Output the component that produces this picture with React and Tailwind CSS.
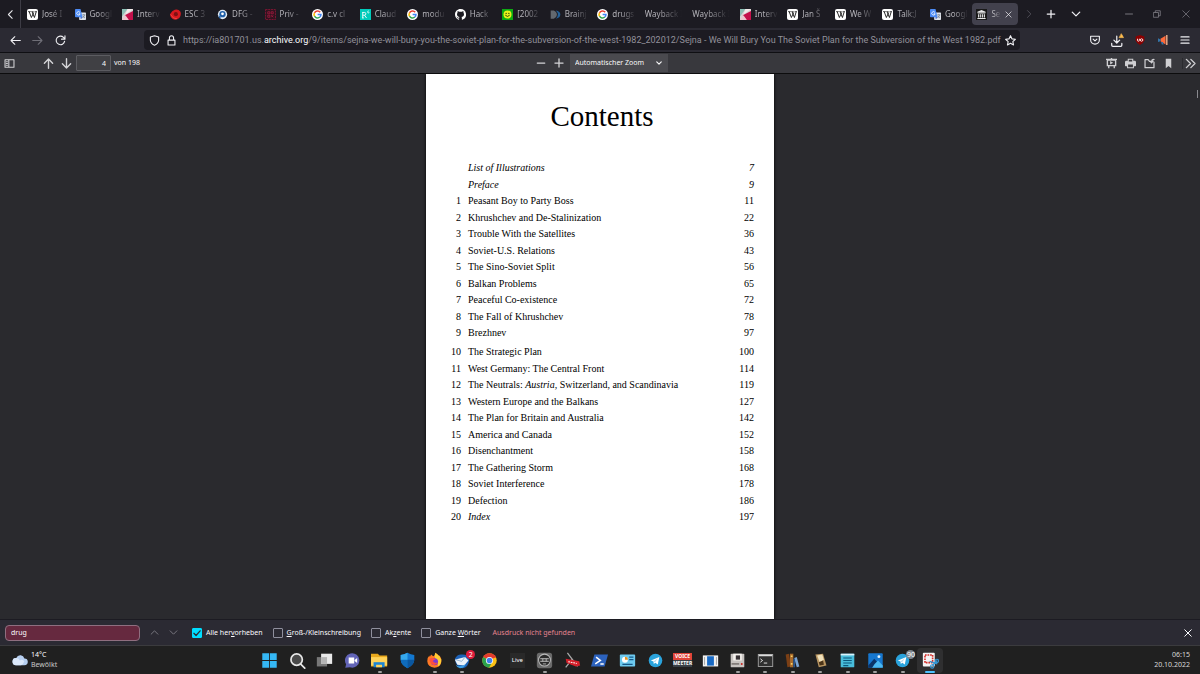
import React from "react";

const line = { fill: "none", stroke: "currentColor", strokeLinecap: "round", strokeLinejoin: "round" };

function Svg({ size = "size-3", box = 16, sw = 1.6, children, className = "" }) {
  return (
    <svg viewBox={`0 0 ${box} ${box}`} className={`${size} shrink-0 ${className}`} {...line} strokeWidth={sw} aria-hidden="true">
      {children}
    </svg>
  );
}

/* ---------- favicons ---------- */

const Fav = ({ children }) => (
  <svg viewBox="0 0 16 16" className="size-[11px] shrink-0" aria-hidden="true">{children}</svg>
);

const Wiki = () => (
  <Fav>
    <rect width="16" height="16" rx="3" fill="#fff" />
    <path d="M1.5 3.8h4M6.3 3.8h3.4M11 3.8h3.6" stroke="#111" strokeWidth="1" />
    <path d="M3.2 4l3.2 8.4L9.8 5M7.4 4l3.4 8.4L13.4 4" fill="none" stroke="#111" strokeWidth="1.3" />
  </Fav>
);
const Translate = () => (
  <Fav>
    <rect x="6" y="5" width="10" height="11" rx="1" fill="#dfe3ea" />
    <path d="M0 1.2Q0 0 1.2 0H8l3 12H1.2Q0 12 0 10.800z" fill="#4c8bf5" />
    <path d="M7.200 5A2.500 2.500 0 1 0 7.500 7H5.300" fill="none" stroke="#fff" strokeWidth="1.200" />
    <path d="M10.500 8.500h4.500M12.700 7.500v1M14 8.500q-.8 3-3 4.500M11.500 10q1 2 3 3" fill="none" stroke="#6b7785" strokeWidth="1" />
    <path d="M8 12h3l-2.500 3z" fill="#2a56c6" />
  </Fav>
);
const Inter = () => (
  <Fav>
    <rect width="16" height="16" fill="#d9d4d4" />
    <path d="M0 0h8L0 11z" fill="#8cc0b6" />
    <path d="M16 3v13H9L4 9z" fill="#c4114b" />
    <path d="M0 16l5-7 5 7z" fill="#efc5cf" />
    <path d="M8 0h8L5 8z" fill="#f3ecec" />
  </Fav>
);
const Esc = () => (
  <Fav>
    <path d="M7 1q5-1.500 8 2.500Q17 9 13.500 13 9 17 4 14.500 0 12 0 7.500 3 2 7 1z" fill="#d8191f" />
    <circle cx="8.500" cy="7.500" r="3" fill="#801013" />
    <path d="M1 8q3 6 9 6" stroke="#ff5650" strokeWidth="1" fill="none" />
  </Fav>
);
const Dfg = () => (
  <Fav>
    <circle cx="8" cy="8" r="6.800" fill="#e4edf6" />
    <circle cx="8" cy="7.500" r="4.600" fill="#1f5fa8" />
    <path d="M2 9q3 1 4 5l-3-1z" fill="#1f5fa8" />
    <circle cx="8" cy="7" r="2" fill="#fff" />
  </Fav>
);
const Priv = () => (
  <Fav>
    <rect x=".7" y=".7" width="14.600" height="14.600" fill="#32131f" stroke="#8a1737" strokeWidth="1.200" strokeDasharray="3 1" />
    <path d="M4 4h3v3H4zM9 4h3v3H9zM4 9h3v3H4zM9 9l3 3M12 9l-3 3" fill="none" stroke="#b01c45" strokeWidth="1" />
  </Fav>
);
const Google = () => (
  <Fav>
    <circle cx="8" cy="8" r="8" fill="#fff" />
    <g fill="none" strokeWidth="2.200">
      <path d="M12 4.700A5 5 0 0 0 3.600 5.700" stroke="#ea4335" />
      <path d="M3.600 5.700A5 5 0 0 0 3.700 10.500" stroke="#fbbc05" />
      <path d="M3.700 10.500A5 5 0 0 0 11.400 11.700" stroke="#34a853" />
      <path d="M11.400 11.700A5 5 0 0 0 13 8H8.200" stroke="#4285f4" />
    </g>
  </Fav>
);
const Rg = () => (
  <Fav>
    <rect width="16" height="16" fill="#00ccbb" />
    <path d="M4 13V5h2.500a2 2 0 0 1 0 4H4M6.500 9l3 4M3 13h2.500M3 5h1" fill="none" stroke="#fff" strokeWidth="1.300" />
    <path d="M13 3a1.500 1.500 0 1 0 .2 2.500V4.600h-1" fill="none" stroke="#fff" strokeWidth=".9" />
  </Fav>
);
const Github = () => (
  <Fav>
    <path fill="#fff" d="M8 0C3.580 0 0 3.580 0 8c0 3.540 2.290 6.530 5.470 7.590.4.070.55-.17.55-.38 0-.19-.01-.82-.01-1.490-2.010.37-2.530-.49-2.690-.94-.09-.23-.48-.94-.82-1.130-.28-.15-.68-.52-.01-.53.63-.01 1.080.58 1.230.82.72 1.210 1.870.87 2.330.66.070-.52.28-.87.51-1.070-1.780-.2-3.640-.89-3.640-3.950 0-.87.31-1.590.82-2.150-.08-.2-.36-1.020.080-2.120 0 0 .67-.21 2.200.82a7.600 7.600 0 0 1 4 0c1.530-1.040 2.200-.82 2.200-.82.44 1.100.16 1.920.080 2.120.51.56.82 1.270.82 2.150 0 3.070-1.870 3.750-3.650 3.950.29.25.54.73.54 1.480 0 1.070-.01 1.930-.01 2.200 0 .21.15.46.55.38A8 8 0 0 0 8 0z" />
  </Fav>
);
const Smiley = () => (
  <Fav>
    <rect width="16" height="16" fill="#0cab12" />
    <circle cx="8" cy="8" r="5.800" fill="#e7f01c" />
    <circle cx="6" cy="6.300" r="1" fill="#182b00" />
    <circle cx="10" cy="6.300" r="1" fill="#182b00" />
    <path d="M4.800 9q3.200 3.600 6.400 0" fill="none" stroke="#182b00" strokeWidth="1.200" />
  </Fav>
);
const Brain = () => (
  <Fav>
    <path d="M1 2h4.500q4.500 2 4.500 6t-4.500 6H1z" fill="#62686f" />
    <path d="M8.500 2q6.500 1 6.500 6t-6.500 6q3-3 3-6t-3-6z" fill="#23629b" />
  </Fav>
);
const Archive = () => (
  <Fav>
    <rect width="16" height="16" fill="#191919" />
    <path d="M8 1.500L14 4v1.300H2V4zM2.500 6h11v1h-11zM3 7.500h1.800v5H3zM6 7.500h1.500v5H6zM8.600 7.500h1.500v5H8.600zM11.300 7.500H13v5h-1.700zM2 13.200h12v1.500H2z" fill="#e8e8e8" />
  </Fav>
);

const tabs = [
  [Wiki, "José I"], [Translate, "Googl"], [Inter, "Interv"], [Esc, "ESC 3"], [Dfg, "DFG -"],
  [Priv, "Priv -"], [Google, "c.v cl"], [Rg, "Claud"], [Google, "modu"], [Github, "Hack"],
  [Smiley, "[2002"], [Brain, "Brainj"], [Google, "drugs"], [null, "Wayback I"], [null, "Wayback I"],
  [Inter, "Interv"], [Wiki, "Jan Š"], [Wiki, "We W"], [Wiki, "Talk:J"], [Translate, "Googl"],
];

function IconButton({ label, className = "", children }) {
  return (
    <button type="button" aria-label={label} className={`flex shrink-0 items-center justify-center ${className}`}>
      {children}
    </button>
  );
}

function TabBar() {
  return (
    <header className="flex h-7 shrink-0 items-center bg-[#1c1b22] text-[8px] text-[#b4b3b9]">
      <IconButton label="Tabs nach links" className="h-7 w-[21px] border-r border-[#3d3c45] text-[#e8e8ec]">
        <Svg size="size-[11px]"><path d="M10.500 2.500L5 8l5.500 5.500" /></Svg>
      </IconButton>
      <div role="tablist" className="grid h-full min-w-0 flex-1 grid-cols-[repeat(21,minmax(0,1fr))] items-center">
        {tabs.map(([Icon, title], i) => (
          <button key={i} type="button" role="tab" aria-selected="false" className="flex min-w-0 items-center gap-1 pl-1.5">
            {Icon && <Icon />}
            <span className="min-w-0 flex-1 overflow-hidden whitespace-nowrap text-left [mask-image:linear-gradient(to_right,black_30%,transparent_90%)]">{title}</span>
          </button>
        ))}
        <div role="tab" aria-selected="true" className="mx-px flex h-[22px] min-w-0 items-center gap-1 rounded-sm bg-[#42414d] pl-1 pr-1.5">
          <Archive />
          <span className="min-w-0 flex-1 overflow-hidden whitespace-nowrap [mask-image:linear-gradient(to_right,black_30%,transparent)]">Sej</span>
          <IconButton label="Tab schließen" className="text-[#f0f0f4]">
            <Svg size="size-[7px]"><path d="M2 2l12 12M14 2L2 14" /></Svg>
          </IconButton>
        </div>
      </div>
      <div className="flex shrink-0 items-center text-[#f0f0f4]">
        <IconButton label="Tabs nach rechts" className="w-5 text-[#4c4b54]"><Svg size="size-2.5"><path d="M5.500 2.500L11 8l-5.500 5.500" /></Svg></IconButton>
        <IconButton label="Neuer Tab" className="w-6"><Svg size="size-2.5" sw={2}><path d="M8 2v12M2 8h12" /></Svg></IconButton>
        <IconButton label="Alle Tabs" className="w-[26px]"><Svg size="size-2.5" sw={2}><path d="M2 5l6 6 6-6" /></Svg></IconButton>
      </div>
      <div className="ml-[26px] flex shrink-0 items-center text-[#77767d]">
        <IconButton label="Minimieren" className="w-7"><Svg size="size-2" sw={2}><path d="M1 8h14" /></Svg></IconButton>
        <IconButton label="Verkleinern" className="w-7"><Svg size="size-2" sw={1.800}><path d="M1.500 5h9.500v9.500H1.500zM4.500 4.500v-3h10v10h-3" /></Svg></IconButton>
        <IconButton label="Schließen" className="w-[29px]"><Svg size="size-2"><path d="M1.500 1.500l13 13M14.500 1.500l-13 13" /></Svg></IconButton>
      </div>
    </header>
  );
}

function NavBar() {
  return (
    <nav className="flex h-[25px] shrink-0 items-center border-b border-[#0f0f13] bg-[#2b2a33] px-1 text-[#f0f0f4]">
      <IconButton label="Zurück" className="w-[22px]"><Svg size="size-[11px]"><path d="M15 8H1.500M7 2.500L1.500 8 7 13.500" /></Svg></IconButton>
      <IconButton label="Vor" className="w-[23px] text-[#6f6e77]"><Svg size="size-[11px]"><path d="M1 8h13.500M9 2.500L14.500 8 9 13.500" /></Svg></IconButton>
      <IconButton label="Neu laden" className="w-[22px]"><Svg size="size-[11px]"><path d="M14 9A6.200 6.200 0 1 1 12.300 3.500L14 5.200M14.500 1v5h-5" /></Svg></IconButton>
      <div className="ml-[73px] flex h-5 min-w-0 flex-1 items-center rounded-sm bg-[#1c1b22] pl-[5px] pr-1">
        <Svg size="size-[11px]"><path d="M8 1l6 1.800V8q-.5 4.500-6 7Q2.500 12.500 2 8V2.800z" /></Svg>
        <Svg size="size-[11px]" className="mx-1.5"><path d="M3 7.500h10v7H3zM5 7V4a3 3 0 0 1 6 0v3" /></Svg>
        <a href="#page" className="min-w-0 flex-1 overflow-hidden whitespace-nowrap font-['Roboto',sans-serif] text-[9px] leading-4 text-[#92919a]">
          https://ia801701.us.<span className="text-[#fbfbfe]">archive.org</span>/9/items/sejna-we-will-bury-you-the-soviet-plan-for-the-subversion-of-the-west-1982_202012/Sejna - We Will Bury You The Soviet Plan for the Subversion of the West 1982.pdf
        </a>
        <IconButton label="Lesezeichen setzen"><Svg size="size-[11px]"><path d="M8 1l2.100 4.600 5 .6-3.700 3.400 1 4.900L8 12l-4.400 2.500 1-4.900L.9 6.200l5-.6z" /></Svg></IconButton>
      </div>
      <div className="ml-16 flex shrink-0 items-center">
        <IconButton label="Pocket" className="w-[22px]"><Svg size="size-2.5" sw={1.800}><path d="M1 2h14v5.500a7 7 0 0 1-14 0zM5 6.500l3 3 3-3" /></Svg></IconButton>
        <IconButton label="Downloads" className="w-[23px]">
          <svg viewBox="0 0 18 20" className="h-[15px] w-[13px]" {...line} strokeWidth="1.700" aria-hidden="true">
            <path d="M8 4v9M4 9.500l4 4 4-4M1 14v2.500q0 1.500 1.500 1.500h11q1.500 0 1.500-1.500V14" />
            <path d="M14.500 1l2.800 5h-5.600z" fill="#ffbd4f" stroke="#ffbd4f" strokeWidth="1" />
          </svg>
        </IconButton>
        <IconButton label="uBlock" className="w-[22px]">
          <svg viewBox="0 0 16 16" className="size-2.5" aria-hidden="true">
            <path d="M8 0l7 2.500v6Q14 13 8 16 2 13 1 8.500v-6z" fill="#8b0000" />
            <path d="M4 6v2.500a1.500 1.500 0 0 0 3 0V6" fill="none" stroke="#fff" strokeWidth="1.400" />
            <circle cx="10.500" cy="8" r="2" fill="none" stroke="#fff" strokeWidth="1.400" />
          </svg>
        </IconButton>
        <IconButton label="Erweiterung" className="w-[23px]">
          <svg viewBox="0 0 16 16" className="size-2.5" aria-hidden="true">
            <path d="M4 6l8-5v14l-8-5z" fill="#ff6a3a" />
            <rect x="13" y="0" width="2.200" height="16" fill="#f5b28e" />
            <path d="M0 5l4 2v3l-4 1zM5 11h3l1 4H6z" fill="#3474a8" />
          </svg>
        </IconButton>
        <IconButton label="Menü" className="w-[22px]"><Svg size="size-2.5" sw={1.800}><path d="M1.500 3h13M1.500 8h13M1.500 13h13" /></Svg></IconButton>
      </div>
    </nav>
  );
}

function PdfToolbar() {
  return (
    <div className="grid h-[21px] shrink-0 grid-cols-[1fr_auto_1fr] items-center border-b border-[#0c0c0d] bg-[#38383d] text-[7px] leading-3 text-[#f9f9fa]">
      <div className="flex items-center pl-1">
        <IconButton label="Seitenleiste" className="mr-6 text-[#cfcfd2]"><Svg size="size-[11px]"><path d="M1.500 2.500h13v11h-13zM7 2.500v11M3.500 5.500h1.500M3.500 8h1.500M3.500 10.500h1.500" /></Svg></IconButton>
        <IconButton label="Vorherige Seite" className="w-[18px] text-[#d4d4d7]"><Svg size="size-[11px]" sw={2}><path d="M8 15V2M2 7.500L8 1.500l6 6" /></Svg></IconButton>
        <IconButton label="Nächste Seite" className="mr-px w-[18px] text-[#d4d4d7]"><Svg size="size-[11px]" sw={2}><path d="M8 1v13M2 8.500l6 6 6-6" /></Svg></IconButton>
        <input id="pageno" aria-label="Seite" defaultValue="4" className="h-4 w-[35px] rounded-[1px] border border-[#5c5c61] bg-[#404044] px-1 text-right outline-none" />
        <label htmlFor="pageno" className="ml-[3px]">von 198</label>
      </div>
      <div className="flex items-center">
        <IconButton label="Verkleinern" className="w-[18px] text-[#d4d4d7]"><Svg size="size-2.5" sw={2}><path d="M2 8h12" /></Svg></IconButton>
        <IconButton label="Vergrößern" className="mr-0.5 w-[18px] text-[#d4d4d7]"><Svg size="size-2.5" sw={2}><path d="M8 1.500v13M1.500 8h13" /></Svg></IconButton>
        <span className="relative flex items-center">
          <select aria-label="Zoom" className="h-[18px] w-[98px] appearance-none bg-[#4a4a4f] pl-[5px] outline-none">
            <option>Automatischer Zoom</option>
          </select>
          <Svg size="size-1.5" sw={3} className="pointer-events-none absolute right-1.5"><path d="M2 5l6 6 6-6" /></Svg>
        </span>
      </div>
      <div className="flex items-center justify-end gap-2 pr-1 text-[#cfcfd2]">
        <IconButton label="Präsentation"><svg viewBox="0 0 16 16" className="size-[11px]" fill="currentColor" aria-hidden="true"><path fillRule="evenodd" d="M0 1h7V0h2v1h7v2h-1v9h-2v3h-2v-3H5v3H3v-3H1V3H0zM3 4v6h10V4zM6 4.500l4.500 2.500L6 9.500z" /></svg></IconButton>
        <IconButton label="Drucken"><svg viewBox="0 0 16 16" className="size-[11px]" fill="currentColor" aria-hidden="true"><path fillRule="evenodd" d="M4 1h8v3h2q2 0 2 2v5q0 1-1 1h-2v3H3v-3H1q-1 0-1-1V6q0-2 2-2h2zM5.500 2.500V5h5V2.500zM4.500 9.500v4h7v-4z" /></svg></IconButton>
        <IconButton label="Öffnen"><Svg size="size-[11px]" sw={1.800}><path d="M14.500 6v8h-13V2.500H6L8 5h1.500M14.500 2q-3.500 0-3.500 4M8.800 4.500L11 7l2.200-2.500" /></Svg></IconButton>
        <IconButton label="Lesezeichen"><svg viewBox="0 0 16 16" className="size-[11px]" fill="currentColor" aria-hidden="true"><path d="M4 1h8v14l-4-3.500L4 15z" /></svg></IconButton>
        <IconButton label="Werkzeuge" className="border-l border-[#2a2a2e] pl-0.5"><Svg size="size-[11px]" sw={2}><path d="M2 2l6 6-6 6M8.500 2l6 6-6 6" /></Svg></IconButton>
      </div>
    </div>
  );
}

const contents = [
  ["", <i>List of Illustrations</i>, <i>7</i>],
  ["", <i>Preface</i>, <i>9</i>],
  ["1", "Peasant Boy to Party Boss", "11"],
  ["2", "Khrushchev and De-Stalinization", "22"],
  ["3", "Trouble With the Satellites", "36"],
  ["4", "Soviet-U.S. Relations", "43"],
  ["5", "The Sino-Soviet Split", "56"],
  ["6", "Balkan Problems", "65"],
  ["7", "Peaceful Co-existence", "72"],
  ["8", "The Fall of Khrushchev", "78"],
  ["9", "Brezhnev", "97"],
  ["10", "The Strategic Plan", "100"],
  ["11", "West Germany: The Central Front", "114"],
  ["12", <>The Neutrals: <i>Austria,</i> Switzerland, and Scandinavia</>, "119"],
  ["13", "Western Europe and the Balkans", "127"],
  ["14", "The Plan for Britain and Australia", "142"],
  ["15", "America and Canada", "152"],
  ["16", "Disenchantment", "158"],
  ["17", "The Gathering Storm", "168"],
  ["18", "Soviet Interference", "178"],
  ["19", "Defection", "186"],
  ["20", <i>Index</i>, "197"],
];

function Rows({ items }) {
  return (
    <tbody>
      {items.map(([no, title, page], i) => (
        <tr key={i} className="h-4 even:h-[17px]">
          <td className="w-[35px] p-0 text-right">{no}</td>
          <td className="p-0 pl-[7px]">{title}</td>
          <td className="p-0 text-right">{page}</td>
        </tr>
      ))}
    </tbody>
  );
}

function Viewer() {
  return (
    <main className="flex min-h-0 flex-1 items-stretch overflow-hidden bg-[#2a2a2e]">
      <div className="flex-1" />
      <article id="page" className="w-[29%] min-w-[348px] bg-white pr-5 pt-6 font-['Liberation_Serif',serif] text-black shadow-[0_0_3px_#000]">
        <h1 className="pl-6 text-center text-[29px] leading-9">Contents</h1>
        <table className="mt-[26px] w-full border-collapse text-[10px] leading-4">
          <Rows items={contents.slice(0, 11)} />
          <tbody><tr className="h-[3px]"><td colSpan={3} className="p-0" /></tr></tbody>
          <Rows items={contents.slice(11)} />
        </table>
      </article>
      <div className="flex flex-1 justify-end pt-4">
        <div className="mr-0.5 h-2 w-px bg-[#8a8a8f]" />
      </div>
    </main>
  );
}

function Check({ id, checked, children }) {
  return (
    <div className="flex items-center gap-1">
      <span className="relative flex">
        <input id={id} type="checkbox" defaultChecked={checked} className="size-2.5 appearance-none rounded-[1px] border border-[#8f8f9d] bg-[#2b2a33] checked:border-[#00ddff] checked:bg-[#00ddff]" />
        {checked && <Svg size="size-2.5" sw={2} className="pointer-events-none absolute inset-0 text-[#2b2a33]"><path d="M3 8.500l3.500 3.500L13 4.500" /></Svg>}
      </span>
      <label htmlFor={id}>{children}</label>
    </div>
  );
}

function FindBar() {
  return (
    <form className="flex h-[26px] shrink-0 items-center border-t border-[#1c1b22] bg-[#2b2a33] pl-[5px] pr-2 text-[7px] leading-3 text-[#fbfbfe]" onSubmit={(e) => e.preventDefault()}>
      <input aria-label="Seite durchsuchen" defaultValue="drug" className="h-4 w-[135px] rounded-sm border border-[#8f6f80] bg-[#66293f] px-[5px] outline-none" />
      <IconButton label="Vorheriges" className="ml-[5px] w-[19px] text-[#85848c]"><Svg size="size-[9px]" sw={1.500}><path d="M2 11l6-6 6 6" /></Svg></IconButton>
      <IconButton label="Nächstes" className="w-[19px] text-[#85848c]"><Svg size="size-[9px]" sw={1.500}><path d="M2 5l6 6 6-6" /></Svg></IconButton>
      <div className="ml-[9px] flex items-center gap-2.5">
        <Check id="all" checked>Alle her<u>v</u>orheben</Check>
        <Check id="case"><u>G</u>roß-/Kleinschreibung</Check>
        <Check id="accent">Ak<u>z</u>ente</Check>
        <Check id="word">Ganze <u>W</u>örter</Check>
      </div>
      <output className="ml-3 text-[#e5838f]">Ausdruck nicht gefunden</output>
      <IconButton label="Suchleiste schließen" className="ml-auto"><Svg size="size-2" sw={2}><path d="M1.500 1.500l13 13M14.500 1.500l-13 13" /></Svg></IconButton>
    </form>
  );
}

/* ---------- taskbar drawings, each on a 20 x 20 canvas ---------- */

const Telegram = () => (
  <>
    <circle cx="10" cy="10" r="8" fill="#2aa3dc" />
    <path d="M4.500 10l10-4.200-1.800 9-3-2.200-1.700 1.600-.4-3z" fill="#fff" />
    <path d="M7.600 11.200l5.500-4-3.600 5z" fill="#b8dcf0" />
  </>
);

const apps = [
  ["Start", <path fill="#35b8f5" d="M1.500 1.500h8v8h-8zM10.500 1.500h8v8h-8zM1.500 10.500h8v8h-8zM10.500 10.500h8v8h-8z" />],
  ["Suche", <g fill="#4a4a4a" stroke="#e8e8e8" strokeWidth="2"><path d="M13.500 14l5 5" strokeLinecap="round" /><circle cx="9" cy="9" r="6.700" /></g>],
  ["Taskansicht", <><path d="M1 6h12v11H1z" fill="#777" /><path d="M6 2h13v12H6z" fill="#e9e9e9" /><path d="M6 6h7v8H6z" fill="#b5b5b5" /></>],
  ["Chat", <><path d="M1.500 18.500l1-4A8.500 8.500 0 1 1 7 18z" fill="#6264b7" /><path d="M5.500 6.500h6.500v7H5.500zM12.500 9.500l3-2.500v6l-3-2.500z" fill="#fff" /></>],
  ["Explorer", <><path d="M0 2h8l2 2h9v13H0z" fill="#e9a91d" /><path d="M0 6h19v10H0z" fill="#ffd35a" /><path d="M3 12h13v6H3z" fill="#1c85d4" /><path d="M6 15h7v3H6z" fill="#ffd35a" /></>, true],
  ["Sicherheit", <><path d="M10 1q4 2.500 8 2.500V9q0 6-8 10Q2 15 2 9V3.500Q6 3.500 10 1z" fill="#1378d1" /><path d="M2 9h8v10Q2 15 2 9z" fill="#0f6cbd" /><path d="M10 9h8q0 6-8 10z" fill="#0b579f" /><path d="M2 9V3.500Q6 3.500 10 1v8z" fill="#36a9ed" /></>],
  ["Firefox", <><path d="M6 3q1 1.500 3 2 2-1 2-4 3 1.500 4 4l1-1q3 4 2 8-1.500 6-8 6.500Q2 18 1.500 11 1.500 6 4 4l.5 2z" fill="#ff7a24" /><path d="M11 1q5 3 7 8 0 6-4 8 1-4-2-8-3-3-1-8z" fill="#ffce35" /><circle cx="10" cy="11.500" r="4.200" fill="#7d3bd0" /><path d="M4 8q4-2 7 1-3 0-3 2 3 3 6 1-2 4-6 3-4-2-4-7z" fill="#ff4f3f" /></>, true],
  ["Thunderbird", <><path d="M1 8q3-6 9-5 7 0 8 6-1 9-8 10-8-1-9-11z" fill="#1d62b8" /><path d="M1 9l12-3 4 4-5 6-8-1z" fill="#edf3fa" /><path d="M2 9l7 2 4-5" fill="none" stroke="#86abcf" /><path d="M2 15q5 4 12-1-2 5-7 5-4-1-5-4z" fill="#3da0e7" /></>, true, "2"],
  ["Chrome", <><circle cx="10" cy="10" r="8.500" fill="#fbc116" /><path d="M10 10L2.600 5.750A8.500 8.500 0 0 1 17.400 5.750z" fill="#e33b2e" /><path d="M2.600 5.750A8.500 8.500 0 0 0 9.500 18.500L13 12 10 10z" fill="#2aa24c" /><path d="M10 6h7.400" stroke="#e33b2e" strokeWidth="1" /><circle cx="10" cy="10" r="4.200" fill="#fff" /><circle cx="10" cy="10" r="3.300" fill="#3f80ee" /></>],
  ["Live", null],
  ["Audio", <><rect x="1" y="1" width="18" height="18" rx="3" fill="#6a6a6a" /><circle cx="10" cy="9.500" r="7" fill="#2a2a2a" stroke="#b9b9b9" strokeWidth="1.200" /><path d="M5 8h10M5 11h10" stroke="#c4c4c4" strokeWidth="1.200" /><path d="M8 8v3M12 8v3M8 14h4" stroke="#c4c4c4" /></>, true],
  ["Pro-Q", <><path d="M4 1l12 16M2 18L10 8" stroke="#a9a9a9" strokeWidth="1.500" fill="none" /><path d="M2 8l16 3 1 5-5 1-11-4z" fill="#d5212b" /><path d="M5 11.500l10 2" stroke="#fff" strokeWidth="1.200" strokeDasharray="2 1" /></>],
  ["PowerShell", <><path d="M4 3h16l-4 14H0z" fill="#2c62bd" /><path d="M6 6l5 4-6 4M11 14h4" fill="none" stroke="#fff" strokeWidth="1.800" /></>],
  ["Systemsteuerung", <><rect x="1" y="3" width="18" height="14" rx="1" fill="#6ecaef" /><circle cx="7" cy="9" r="3.500" fill="#fff" /><path d="M7 9V5.500A3.500 3.500 0 0 1 10.500 9z" fill="#e69221" /><path d="M12 6h5M12 9h5M4 14.500h12" stroke="#165889" strokeWidth="1.500" /></>],
  ["Telegram", <Telegram />],
  ["Voicemeeter", null],
  ["Fenster", <><rect x="1" y="4" width="18" height="13" fill="#f2f2f2" /><rect x="6" y="5" width="8" height="11" fill="#1769c4" /><path d="M3 6v9M17 6v9" stroke="#999" /></>],
  ["Editor", <><rect x="2" y="2" width="16" height="16" rx="1" fill="#c8c4c1" /><rect x="5" y="2" width="10" height="8" fill="#f5f2ee" /><rect x="8" y="4" width="5" height="5" fill="#393336" /><path d="M3 14h9" stroke="#817b78" strokeWidth="2" /><circle cx="15" cy="14" r="1.200" fill="#c8221d" /></>, true],
  ["Terminal", <><rect x="1.500" y="3" width="17" height="14" fill="#303030" stroke="#aaa" /><path d="M2 4h16" stroke="#ddd" strokeWidth="2" /><path d="M4 8l2.500 2L4 12M8 13h4" fill="none" stroke="#fff" /></>, true],
  ["Calibre", <><path d="M2 3l4-1 2 15-4 1z" fill="#7b3f15" /><path d="M7 2h4v16H7z" fill="#a86b2c" /><path d="M8 5h2M8 14h2" stroke="#f7d169" strokeWidth="2" /><path d="M12 7l3-1 3 11-3 1z" fill="#7ba5d4" /><path d="M11 8h2v10h-2z" fill="#2a5892" /></>, true],
  ["Solitär", <><path d="M4 3l9-1 4 14-9 2z" fill="#b89561" /><path d="M6 4l6-1 2 6-5 3z" fill="#f0e1bc" /><path d="M8 12l5-2 1 5-5 1z" fill="#4c3418" /></>, true],
  ["Notizblock", <><rect x="2" y="2" width="16" height="16" rx="1" fill="#49bddb" /><path d="M2 4V2h16v2z" fill="#d9f2fa" /><path d="M5 7h10M5 10h10M5 13h10M5 16h6" stroke="#0c577c" strokeWidth="1.300" /></>, true],
  ["Fotos", <><rect x="1.500" y="1.500" width="17" height="17" rx="1" fill="#1677cf" /><path d="M1.500 16l7-8 10 10.500h-17z" fill="#0b3469" /><path d="M9 14l4-4 5.500 6v2.500H6z" fill="#4ab8f2" /><circle cx="14" cy="5.500" r="1.700" fill="#e7f6ff" /></>, true],
  ["Telegram Desktop", <Telegram />, true, "90"],
  ["Snipping Tool", <><rect x="1" y="1" width="14" height="16" rx="1" fill="#f5f5f5" /><rect x="3.500" y="3.500" width="9" height="9" fill="none" stroke="#d4302b" strokeWidth="1.900" strokeDasharray="2 1" /><path d="M9 11l9 3M12 16l6-6" stroke="#3695d2" strokeWidth="1.600" /><circle cx="17.500" cy="10.500" r="2" fill="none" stroke="#3695d2" strokeWidth="1.300" /><circle cx="12" cy="17" r="2" fill="none" stroke="#3695d2" strokeWidth="1.300" /></>, true],
];

const LiveTile = () => <span className="flex size-[15px] items-center justify-center bg-[#292929] text-[6px]">Live</span>;

const VoiceTile = () => (
  <span className="flex flex-col text-center text-[5px] font-bold leading-[7px]">
    <span className="bg-[#e04438]">VOICE</span>
    <span className="bg-[#394047]">MEETER</span>
  </span>
);

function Taskbar() {
  return (
    <footer className="grid h-[29px] shrink-0 grid-cols-[1fr_auto_1fr] items-center border-t border-[#3b3b3e] bg-[#202020] text-[7px] leading-[10px] text-white">
      <button type="button" className="flex items-center gap-[3px] pl-3 text-left">
        <svg viewBox="0 0 20 20" className="size-4" aria-hidden="true">
          <path d="M5 16.500a4.500 4.500 0 0 1 .3-9Q7 3.500 11 4q3.500.5 4.500 4a4.200 4.200 0 0 1 0 8.500z" fill="#b7cff0" />
          <path d="M5 16.500a4.500 4.500 0 0 1 .3-9q3 0 4.500 3 3-2 5.500 1-1 4-4 5z" fill="#dbe8fa" />
        </svg>
        <span className="text-[#c9c9c9]"><span className="block text-white">14°C</span>Bewölkt</span>
      </button>
      <div className="grid w-[688px] grid-cols-[repeat(25,minmax(0,1fr))]">
        {apps.map(([name, art, running, badge], i) => (
          <button
            key={name}
            type="button"
            aria-label={name}
            className={`relative mx-px flex h-[25px] items-center justify-center rounded-sm ${i === apps.length - 1 ? "bg-[#2f2f30]" : ""}`}
          >
            {art && <svg viewBox="0 0 20 20" className="size-[17px]" aria-hidden="true">{art}</svg>}
            {name === "Live" && <LiveTile />}
            {name === "Voicemeeter" && <VoiceTile />}
            {badge && (
              <span className={`absolute right-0 top-0.5 flex size-[9px] items-center justify-center rounded-full text-[7px] leading-none ${badge === "2" ? "bg-[#e01b3c]" : "bg-[#7d858c]"}`}>{badge}</span>
            )}
            {running && (
              <span className={`absolute bottom-0 h-0.5 rounded-full ${i === apps.length - 1 ? "w-2.5 bg-[#4cc2ff]" : "w-1 bg-[#a0a0a0]"}`} />
            )}
          </button>
        ))}
      </div>
      <div className="pr-2.5 text-right text-[#d8d8d8]"><time className="block">06:15</time><time className="block">20.10.2022</time></div>
    </footer>
  );
}

export default function App() {
  return (
    <div className="flex h-screen flex-col overflow-hidden bg-[#2a2a2e] font-['Noto_Sans',sans-serif]">
      <TabBar />
      <NavBar />
      <PdfToolbar />
      <Viewer />
      <FindBar />
      <Taskbar />
    </div>
  );
}
